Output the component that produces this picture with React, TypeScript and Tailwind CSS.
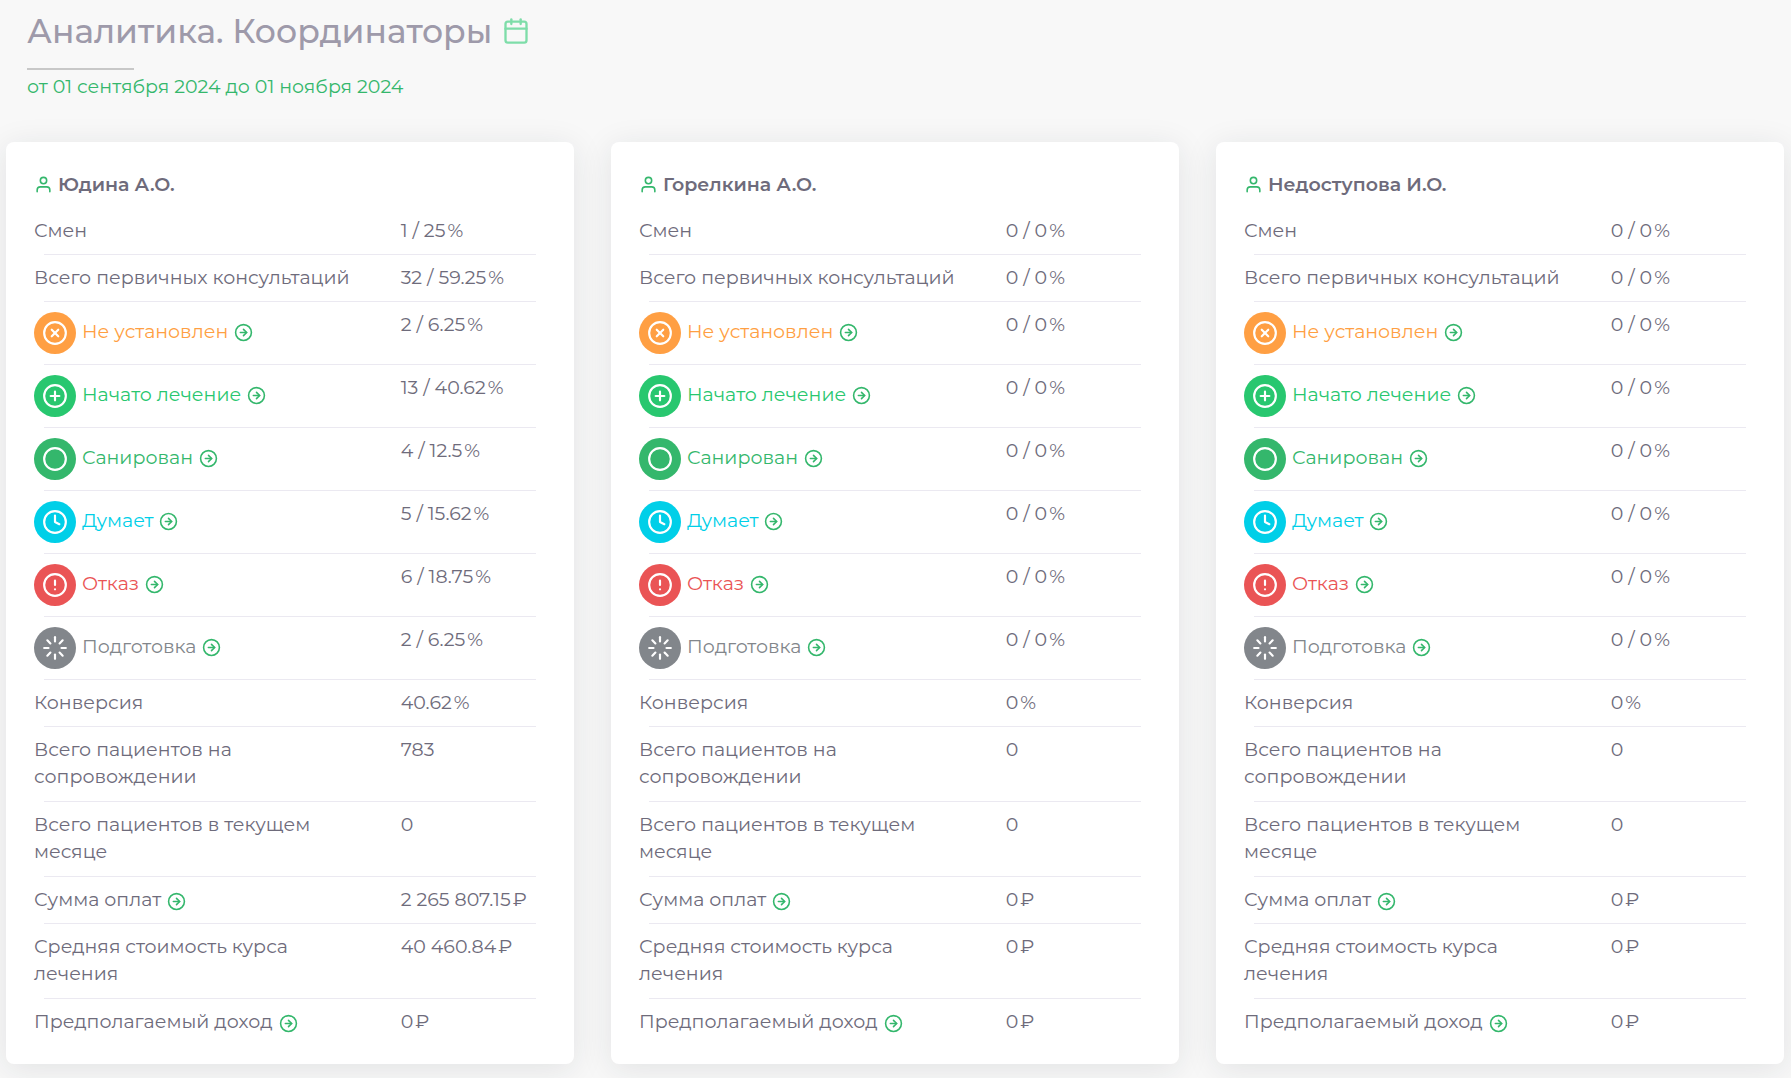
import type { ReactNode } from "react";
import type { IconType } from "react-icons";
import {
  FiAlertCircle,
  FiArrowRightCircle,
  FiCalendar,
  FiCircle,
  FiClock,
  FiLoader,
  FiPlusCircle,
  FiUser,
  FiXCircle,
} from "react-icons/fi";

interface Metric {
  label: string;
  unit?: "%" | "₽";
  icon?: IconType;
  bg?: string;
  color?: string;
  link?: boolean;
  tall?: boolean;
}

interface Coordinator {
  name: string;
  values: string[];
}

const metrics: Metric[] = [
  { label: "Смен", unit: "%" },
  { label: "Всего первичных консультаций", unit: "%" },
  { label: "Не установлен", unit: "%", icon: FiXCircle, bg: "bg-[#ff9f43]", color: "text-[#ff9f43]", link: true },
  { label: "Начато лечение", unit: "%", icon: FiPlusCircle, bg: "bg-[#28c76f]", color: "text-[#28c76f]", link: true },
  { label: "Санирован", unit: "%", icon: FiCircle, bg: "bg-[#34b76c]", color: "text-[#34b76c]", link: true },
  { label: "Думает", unit: "%", icon: FiClock, bg: "bg-[#00cfe8]", color: "text-[#00cfe8]", link: true },
  { label: "Отказ", unit: "%", icon: FiAlertCircle, bg: "bg-[#ea5455]", color: "text-[#ea5455]", link: true },
  { label: "Подготовка", unit: "%", icon: FiLoader, bg: "bg-[#82868b]", color: "text-[#82868b]", link: true },
  { label: "Конверсия", unit: "%" },
  { label: "Всего пациентов на сопровождении", tall: true },
  { label: "Всего пациентов в текущем месяце", tall: true },
  { label: "Сумма оплат", unit: "₽", link: true },
  { label: "Средняя стоимость курса лечения", unit: "₽", tall: true },
  { label: "Предполагаемый доход", unit: "₽", link: true },
];

const emptyValues = [
  "0 / 0", "0 / 0", "0 / 0", "0 / 0", "0 / 0", "0 / 0", "0 / 0", "0 / 0",
  "0", "0", "0", "0", "0", "0",
];

const coordinators: Coordinator[] = [
  {
    name: "Юдина А.О.",
    values: [
      "1 / 25", "32 / 59.25", "2 / 6.25", "13 / 40.62", "4 / 12.5", "5 / 15.62", "6 / 18.75", "2 / 6.25",
      "40.62", "783", "0", "2 265 807.15", "40 460.84", "0",
    ],
  },
  { name: "Горелкина А.О.", values: emptyValues },
  { name: "Недоступова И.О.", values: emptyValues },
];

function DetailsLink({ label }: { label: string }) {
  return (
    <a href="#details" aria-label={`${label}: подробнее`} className="ml-1.5 inline-block align-middle text-[#34b76c]">
      <FiArrowRightCircle className="size-[19px]" />
    </a>
  );
}

function MetricLabel({ metric }: { metric: Metric }) {
  const Icon = metric.icon;
  const link: ReactNode = metric.link && <DetailsLink label={metric.label} />;

  if (!Icon) {
    return (
      <>
        {metric.label}
        {link}
      </>
    );
  }

  return (
    <div className="flex min-h-[43px] items-center">
      <span className={`mr-1.5 flex size-[42px] shrink-0 items-center justify-center rounded-full text-white ${metric.bg}`}>
        <Icon className="size-[26px]" />
      </span>
      <span className={`pb-[3px] ${metric.color}`}>
        {metric.label}
        {link}
      </span>
    </div>
  );
}

function CoordinatorCard({ coordinator }: { coordinator: Coordinator }) {
  return (
    <section className="rounded-lg bg-white px-7 pt-7 pb-[29px] shadow-[0_5px_32px_rgba(34,41,47,0.1)]">
      <h2 className="mb-[9px] flex items-center gap-[5px] leading-[29px] font-semibold">
        <FiUser className="size-[19px] text-[#34b76c]" />
        {coordinator.name}
      </h2>
      <table className="block">
        <tbody className="block">
          {metrics.map((metric, i) => (
            <tr
              key={metric.label}
              className={`mx-[10px] grid grid-cols-[minmax(0,29fr)_minmax(0,11fr)] border-[#ebe9f1] pt-[9px] not-last:border-b not-last:pb-[10px] ${
                metric.tall ? "min-h-[75px]" : ""
              }`}
            >
              <th scope="row" className="-ml-[10px] pr-[30px] text-left font-normal">
                <MetricLabel metric={metric} />
              </th>
              <td className="whitespace-nowrap">
                {coordinator.values[i]}
                {metric.unit && <span className="ml-0.5">{metric.unit}</span>}
              </td>
            </tr>
          ))}
        </tbody>
      </table>
    </section>
  );
}

export default function App() {
  return (
    <div className="min-h-screen bg-[#f8f8f8] font-['Montserrat','Inter',sans-serif] text-[19px] leading-[27px] text-[#6e6b7b]">
      <header className="px-[27px] pt-2.5">
        <div className="flex items-center gap-2.5">
          <h1 className="text-[33px] leading-[42px] font-medium text-[#9e9aaa]">Аналитика. Координаторы</h1>
          <button type="button" aria-label="Выбрать период" className="text-[#7edda9]">
            <FiCalendar className="size-7" />
          </button>
        </div>
        <div className="mt-4 h-0.5 w-[107px] bg-[#c8c8c8]" />
        <p className="mt-[3px] text-[#34b76c]">от 01 сентября 2024 до 01 ноября 2024</p>
      </header>
      <main className="mt-[42px] grid grid-cols-3 items-start gap-[37px] pr-[7px] pb-3.5 pl-1.5">
        {coordinators.map((coordinator) => (
          <CoordinatorCard key={coordinator.name} coordinator={coordinator} />
        ))}
      </main>
    </div>
  );
}
